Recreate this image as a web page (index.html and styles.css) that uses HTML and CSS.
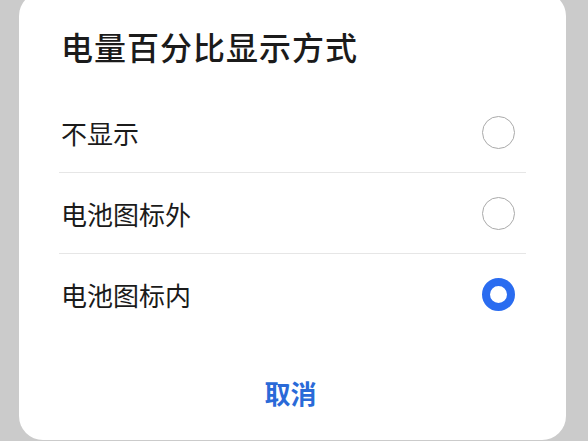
FILE: index.html
```html
<!DOCTYPE html>
<html lang="zh-CN">
<head>
<meta charset="utf-8">
<link rel="stylesheet" href="styles.css">
</head>
<body>
<div class="dialog">
  <div class="title">电量百分比显示方式</div>
  <div class="rows">
    <div class="row"><span class="label">不显示</span><span class="radio"></span></div>
    <div class="row"><span class="label">电池图标外</span><span class="radio"></span></div>
    <div class="row"><span class="label">电池图标内</span><span class="radio checked"></span></div>
  </div>
  <div class="actions"><span class="cancel">取消</span></div>
</div>
</body>
</html>
```
FILE: styles.css
```css
html, body {
  margin: 0;
  padding: 0;
}
body {
  background: #cbcbcb;
  font-family: "Noto Sans CJK SC", "Noto Sans", sans-serif;
  width: 588px;
  height: 441px;
  overflow: hidden;
}
.dialog {
  margin: -8px 0 0 19px;
  width: 547px;
  height: 448px;
  background: #fff;
  border-radius: 24px;
  box-sizing: border-box;
}
.title {
  height: 100px;
  padding: 8px 0 0 42px;
  box-sizing: border-box;
  display: flex;
  align-items: center;
  font-size: 32px;
  font-weight: 500;
  color: #1b1b1b;
  letter-spacing: 1px;
}
.rows {
  padding: 0 40px;
}
.row {
  height: 80px;
  display: flex;
  align-items: center;
  justify-content: space-between;
  border-bottom: 1px solid #e6e6e6;
}
.row:last-child {
  border-bottom: none;
}
.label {
  margin-left: 2px;
  font-size: 26px;
  color: #1b1b1b;
}
.radio {
  width: 33px;
  height: 33px;
  margin-right: 11px;
  border-radius: 50%;
  border: 1.5px solid #aaaaaa;
  box-sizing: border-box;
}
.radio.checked {
  border: 8px solid #2a6cf0;
}
.actions {
  margin-top: 34px;
  height: 48px;
  display: flex;
  align-items: center;
  justify-content: center;
}
.cancel {
  font-size: 26px;
  font-weight: 700;
  color: #2a6ad8;
  margin-left: -4px;
}
```
